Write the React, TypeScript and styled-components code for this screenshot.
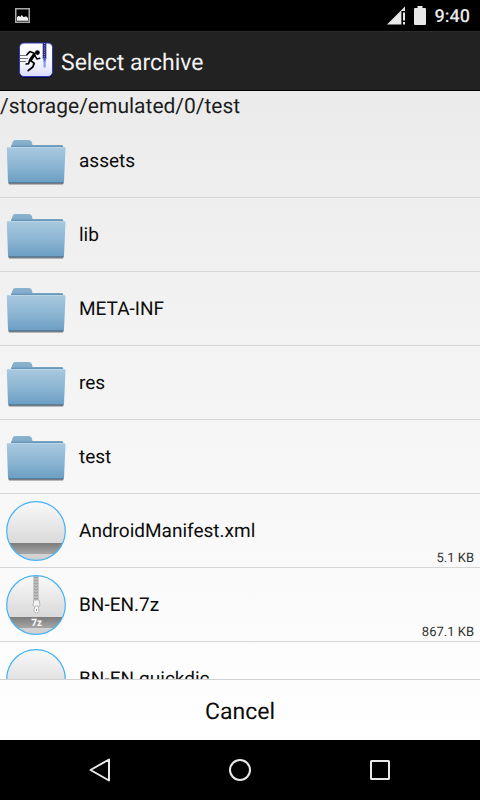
import React from "react";
import styled, { createGlobalStyle } from "styled-components";

const GlobalStyle = createGlobalStyle`
  * { box-sizing: border-box; }
  body { margin: 0; background: #000; font-family: Roboto, sans-serif; text-rendering: geometricPrecision; }
  button { font: inherit; border: 0; padding: 0; margin: 0; background: none; color: inherit; cursor: pointer; text-rendering: inherit; }
`;

const Screen = styled.div`
  display: flex;
  flex-direction: column;
  height: 100vh;
  background: #000;
  color: #0c0c0c;
`;

const StatusBar = styled.div`
  display: flex;
  align-items: center;
  justify-content: space-between;
  flex: none;
  height: 31px;
  padding: 0 10px 0 15px;
  color: #e8e8e8;
`;

const StatusGroup = styled.div`
  display: flex;
  align-items: center;
  gap: 9px;
`;

const Clock = styled.time`
  font-size: 18px;
  font-weight: 500;
  line-height: 24px;
  padding-top: 2px;
`;

const Header = styled.header`
  display: flex;
  align-items: center;
  flex: none;
  gap: 4px;
  height: 60px;
  padding-left: 15px;
  background: #222;
  border-top: 1px solid #2c2c2c;
  border-bottom: 1px solid #000;
`;

const Title = styled.h1`
  margin: 0;
  padding-top: 3px;
  font-size: 23px;
  line-height: 28px;
  font-weight: 400;
  color: #f3f3f3;
`;

const Content = styled.main`
  display: flex;
  flex-direction: column;
  flex: 1;
  min-height: 0;
  background: linear-gradient(#ebebeb, #fff);
`;

const PathText = styled.div`
  flex: none;
  font-size: 21px;
  line-height: 33px;
  color: #1c1c1c;
`;

const FileList = styled.ul`
  flex: 1;
  min-height: 0;
  margin: 0;
  padding: 0;
  list-style: none;
  overflow-y: auto;
  scrollbar-width: none;
`;

const FileItem = styled.li`
  height: 74px;
  border-bottom: 1px solid #d6d6d6;
`;

const FileButton = styled.button`
  display: grid;
  grid-template-columns: 60px 1fr auto;
  column-gap: 13px;
  align-items: center;
  width: 100%;
  height: 100%;
  padding: 0 6px;
  text-align: left;
`;

const FileName = styled.span`
  font-size: 19px;
  line-height: 24px;
`;

const FileSize = styled.span`
  align-self: end;
  font-size: 13px;
  line-height: 16px;
  color: #333;
`;

const CancelButton = styled.button`
  && {
    flex: none;
    height: 61px;
    border-top: 1px solid #d2d2d2;
    font-size: 23px;
    line-height: 28px;
    padding-top: 4px;
  }
`;

const NavBar = styled.nav`
  display: flex;
  justify-content: center;
  flex: none;
  gap: 80px;
  height: 60px;
`;

const NavButton = styled.button`
  display: flex;
  align-items: center;
  justify-content: center;
  width: 60px;
`;

const Icon = styled.svg`
  display: block;
  flex: none;
`;

function PictureIcon() {
  return (
    <Icon width="15" height="15" viewBox="0 0 15 15" aria-label="Screenshot saved">
      <rect x=".75" y=".75" width="13.5" height="13.5" fill="none" stroke="#aaa" strokeWidth="1.5" />
      <path d="M2 12.8V9.2L3.2 8h1l1 1 1.6-2L8 8.4l1 .8 1-.6h1.5L13 10v2.8Z" fill="#f2f2f2" />
    </Icon>
  );
}

function SignalIcon() {
  return (
    <Icon width="18" height="19" viewBox="0 0 18 19" aria-label="Signal">
      <path d="M0 18.5 18 .5V5h-3.6v13.5Z" fill="#e8e8e8" />
      <path d="M16 6.5h2v8h-2ZM16 16h2v2.5h-2Z" fill="#e8e8e8" />
    </Icon>
  );
}

function BatteryIcon() {
  return (
    <Icon width="12" height="19" viewBox="0 0 12 19" aria-label="Battery">
      <path d="M3.5 0h5v2H11a1 1 0 0 1 1 1v15a1 1 0 0 1-1 1H1a1 1 0 0 1-1-1V3a1 1 0 0 1 1-1h2.5Z" fill="#e8e8e8" />
    </Icon>
  );
}

function AppIcon() {
  return (
    <Icon width="42" height="44" viewBox="0 0 42 44" aria-hidden="true">
      <defs>
        <linearGradient id="app-face" x1="0" y1="0" x2="0" y2="1">
          <stop offset="0" stopColor="#fff" />
          <stop offset=".6" stopColor="#f3f3ff" />
          <stop offset="1" stopColor="#dcdcff" />
        </linearGradient>
      </defs>
      <rect x="4" y="4" width="34" height="35" rx="5" fill="#080a38" />
      <rect x="4.5" y="4" width="33" height="33.5" rx="4.5" fill="url(#app-face)" stroke="#3438b0" strokeWidth="1" />
      <path d="M5 16.5h7M5 19.5h8M5 22.5h6" stroke="#777" strokeWidth="1" />
      <circle cx="22.4" cy="13.6" r="2.4" fill="#000" />
      <path d="M12 15.6 14.8 12.6l5 1.8" fill="none" stroke="#000" strokeWidth="1.6" strokeLinecap="round" strokeLinejoin="round" />
      <path d="m19 16-3.6 5" stroke="#000" strokeWidth="3" strokeLinecap="round" />
      <path d="m20 16.6 1.8 3.4 3-.8" fill="none" stroke="#000" strokeWidth="1.5" strokeLinecap="round" strokeLinejoin="round" />
      <path d="m15.8 21.6 3.4 2.8-1.4 3.6-4.6 3.6" fill="none" stroke="#000" strokeWidth="1.8" strokeLinecap="round" strokeLinejoin="round" />
      <path d="m14.6 21.4-1 3.2-2.4.4" fill="none" stroke="#000" strokeWidth="1.7" strokeLinecap="round" strokeLinejoin="round" />
      <path d="M29.5 4v16" stroke="#252878" strokeWidth="3.6" />
      <path d="M29.5 4v16" stroke="#8a8fe0" strokeWidth="1.2" strokeDasharray="1 1.2" />
      <path d="M28 19h3.2l-.6 4h-2Z" fill="#5a66ef" />
      <path d="M29.6 23.5v4" stroke="#8fa0ff" strokeWidth="2.4" strokeLinecap="round" />
    </Icon>
  );
}

function FolderIcon() {
  return (
    <Icon width="60" height="60" viewBox="0 1 60 60" aria-hidden="true">
      <defs>
        <linearGradient id="folder-front" x1="0" y1="0" x2="0" y2="1">
          <stop offset="0" stopColor="#a9c9df" />
          <stop offset=".5" stopColor="#8db6d3" />
          <stop offset="1" stopColor="#6b9dc3" />
        </linearGradient>
        <linearGradient id="folder-back" x1="0" y1="0" x2="0" y2="1">
          <stop offset="0" stopColor="#8bb3cf" />
          <stop offset=".7" stopColor="#78a5c5" />
        </linearGradient>
      </defs>
      <path d="M2.5 52h55v1.4q0 1-1.2 1H3.7q-1.2 0-1.2-1Z" fill="#777c82" />
      <path d="M4 18q1.4-1 1.6-3l1-3q.6-2 2.5-2H23q2.5 0 3 2.5l.5 2.5H55q2.5 0 2.6 3V25H3Z" fill="url(#folder-back)" />
      <path d="M5 16.2h52" stroke="#5e91b6" />
      <path d="M2 17h56q1.5 0 1.5 1.6l-1.5 33q0 1.4-1.5 1.4H3.5q-1.5 0-1.5-1.4L.8 18.6Q.8 17 2 17Z" fill="url(#folder-front)" />
      <path d="M2 17.5h56" stroke="#bad4e5" />
      <path d="M2.8 52.5h54.5" stroke="#527f9f" />
    </Icon>
  );
}

function FileIcon({ zip, id }: { zip?: string; id: string }) {
  const clip = `disc-${id}`;
  const face = `face-${id}`;
  const band = `band-${id}`;
  return (
    <Icon width="60" height="60" viewBox="0 0 60 60" aria-hidden="true">
      <defs>
        <clipPath id={clip}><circle cx="30" cy="30" r="29.3" /></clipPath>
        <linearGradient id={face} x1="0" y1="0" x2="0" y2="1">
          <stop offset="0" stopColor="#fafafa" />
          <stop offset=".7" stopColor="#d9d9d9" />
          <stop offset="1" stopColor="#cfcfcf" />
        </linearGradient>
        <linearGradient id={band} x1="0" y1="0" x2="0" y2="1">
          <stop offset="0" stopColor="#7c7c7c" />
          <stop offset="1" stopColor="#a6a6a6" />
        </linearGradient>
      </defs>
      <g clipPath={`url(#${clip})`}>
        <rect width="60" height="60" fill={`url(#${face})`} />
        <rect y="42" width="60" height="11" fill={`url(#${band})`} />
        {zip && (
          <>
            <path d="M30 0v27" stroke="#a3a3a3" strokeWidth="5" />
            <path d="M30 0v27" stroke="#dedede" strokeWidth="3" strokeDasharray="1.5 1.5" />
            <path d="M30 0v27" stroke="#858585" strokeWidth="1" strokeDasharray="1 2" />
            <path d="M28 25h5l1 5-2 3h-3l-2-3Z" fill="#f4f4f4" stroke="#aaa" strokeWidth=".8" />
            <path d="M29 31h3l1 5q-.5 2-2.5 2T28 36Z" fill="#fff" stroke="#aaa" strokeWidth=".8" />
            <path d="M30.5 34v2" stroke="#888" />
            <text x="30.5" y="51" textAnchor="middle" fontFamily="Open Sans" fontSize="10" fontWeight="700" fill="#fff">{zip}</text>
          </>
        )}
      </g>
      <circle cx="30" cy="30" r="29.3" fill="none" stroke="#43b2f4" strokeWidth="1.2" />
    </Icon>
  );
}

type Entry = { name: string; folder?: boolean; size?: string; zip?: string };

const entries: Entry[] = [
  { name: "assets", folder: true },
  { name: "lib", folder: true },
  { name: "META-INF", folder: true },
  { name: "res", folder: true },
  { name: "test", folder: true },
  { name: "AndroidManifest.xml", size: "5.1 KB" },
  { name: "BN-EN.7z", size: "867.1 KB", zip: "7z" },
  { name: "BN-EN.quickdic" },
];

export default function App() {
  return (
    <Screen>
      <GlobalStyle />
      <StatusBar>
        <PictureIcon />
        <StatusGroup>
          <SignalIcon />
          <BatteryIcon />
          <Clock>9:40</Clock>
        </StatusGroup>
      </StatusBar>
      <Header>
        <AppIcon />
        <Title>Select archive</Title>
      </Header>
      <Content>
        <PathText>/storage/emulated/0/test</PathText>
        <FileList>
          {entries.map((entry, i) => (
            <FileItem key={entry.name}>
              <FileButton type="button">
                {entry.folder ? <FolderIcon /> : <FileIcon id={String(i)} zip={entry.zip} />}
                <FileName>{entry.name}</FileName>
                {entry.size && <FileSize>{entry.size}</FileSize>}
              </FileButton>
            </FileItem>
          ))}
        </FileList>
        <CancelButton type="button">Cancel</CancelButton>
      </Content>
      <NavBar>
        <NavButton type="button" aria-label="Back">
          <Icon width="24" height="24" viewBox="0 0 24 24">
            <path d="M21 1.5v21L2.5 12Z" fill="none" stroke="#e8e8e8" strokeWidth="2" strokeLinejoin="round" />
          </Icon>
        </NavButton>
        <NavButton type="button" aria-label="Home">
          <Icon width="24" height="24" viewBox="0 0 24 24">
            <circle cx="12" cy="12" r="10" fill="none" stroke="#e8e8e8" strokeWidth="2" />
          </Icon>
        </NavButton>
        <NavButton type="button" aria-label="Recent apps">
          <Icon width="24" height="24" viewBox="0 0 24 24">
            <rect x="3" y="3" width="18" height="18" rx=".5" fill="none" stroke="#e8e8e8" strokeWidth="2" />
          </Icon>
        </NavButton>
      </NavBar>
    </Screen>
  );
}
